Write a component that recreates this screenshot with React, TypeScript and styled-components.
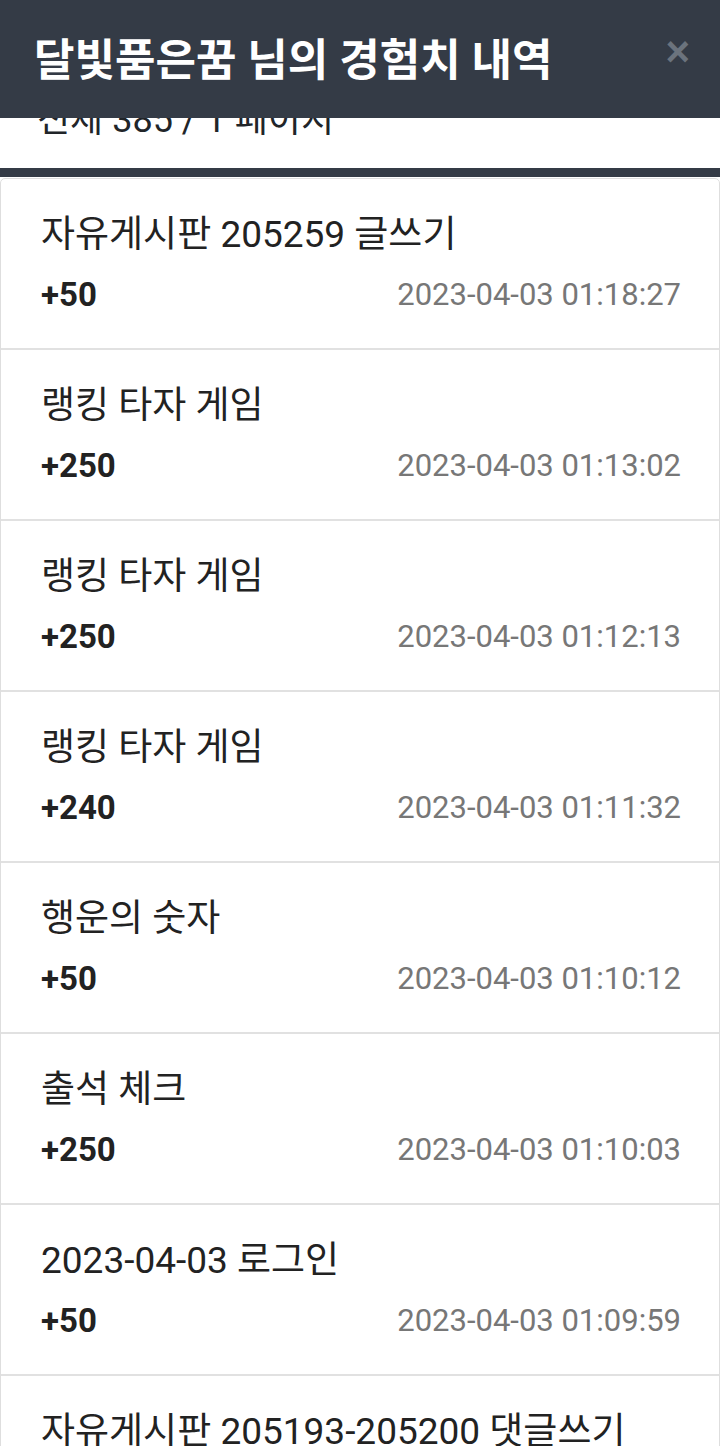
import styled, { createGlobalStyle } from 'styled-components';

const GlobalStyle = createGlobalStyle`
  html, body {
    margin: 0;
    padding: 0;
    background: #ffffff;
  }
  body {
    font-family: Roboto, "Noto Sans CJK KR", sans-serif;
    color: #212529;
  }
`;

const DARK = '#343b46';

const Header = styled.header`
  position: fixed;
  top: 0;
  left: 0;
  right: 0;
  height: 118px;
  display: flex;
  align-items: center;
  justify-content: space-between;
  padding: 0 30px 0 34px;
  box-sizing: border-box;
  background-color: ${DARK};
  z-index: 10;
`;

const Title = styled.h1`
  margin: 0;
  margin-top: -4px;
  font-size: 44px;
  font-weight: 700;
  color: #ffffff;
`;

const CloseButton = styled.button`
  border: 0;
  background: none;
  padding: 0;
  margin-top: -14px;
  font-family: "Liberation Sans", Arial, sans-serif;
  font-size: 42px;
  font-weight: 700;
  line-height: 1;
  color: #6b737d;
  cursor: pointer;
`;

const Summary = styled.div`
  padding: 98px 37px 26px;
  font-size: 36px;
  line-height: 44px;
  color: #212529;
  border-bottom: 9px solid ${DARK};
`;

const List = styled.ul`
  list-style: none;
  margin: 1px 0 0;
  padding: 0;
  border: 1px solid #dedede;
  border-radius: 5px;
  overflow: hidden;
`;

const Item = styled.li`
  padding: 34px 38px 34px 40px;
  border-top: 2px solid #e1e1e1;

  &:first-child {
    border-top: 0;
  }
`;

const ItemTitle = styled.div`
  font-size: 37px;
  line-height: 44px;
  color: #222222;
`;

const ItemMeta = styled.div`
  display: flex;
  align-items: center;
  justify-content: space-between;
  margin-top: 17px;
  height: 40px;
`;

const Points = styled.span`
  font-size: 33px;
  font-weight: 700;
  color: #222222;
`;

const Time = styled.span`
  font-size: 31px;
  color: #777777;
`;

interface LogEntry {
  title: string;
  points: number;
  time: string;
}

const entries: LogEntry[] = [
  { title: '자유게시판 205259 글쓰기', points: 50, time: '2023-04-03 01:18:27' },
  { title: '랭킹 타자 게임', points: 250, time: '2023-04-03 01:13:02' },
  { title: '랭킹 타자 게임', points: 250, time: '2023-04-03 01:12:13' },
  { title: '랭킹 타자 게임', points: 240, time: '2023-04-03 01:11:32' },
  { title: '행운의 숫자', points: 50, time: '2023-04-03 01:10:12' },
  { title: '출석 체크', points: 250, time: '2023-04-03 01:10:03' },
  { title: '2023-04-03 로그인', points: 50, time: '2023-04-03 01:09:59' },
  { title: '자유게시판 205193-205200 댓글쓰기', points: 40, time: '2023-04-03 00:58:41' },
];

export default function App() {
  return (
    <>
      <GlobalStyle />
      <Header>
        <Title>달빛품은꿈 님의 경험치 내역</Title>
        <CloseButton aria-label="닫기">×</CloseButton>
      </Header>
      <Summary>전체 385 / 1 페이지</Summary>
      <List>
        {entries.map((e, i) => (
          <Item key={i}>
            <ItemTitle>{e.title}</ItemTitle>
            <ItemMeta>
              <Points>+{e.points}</Points>
              <Time>{e.time}</Time>
            </ItemMeta>
          </Item>
        ))}
      </List>
    </>
  );
}
